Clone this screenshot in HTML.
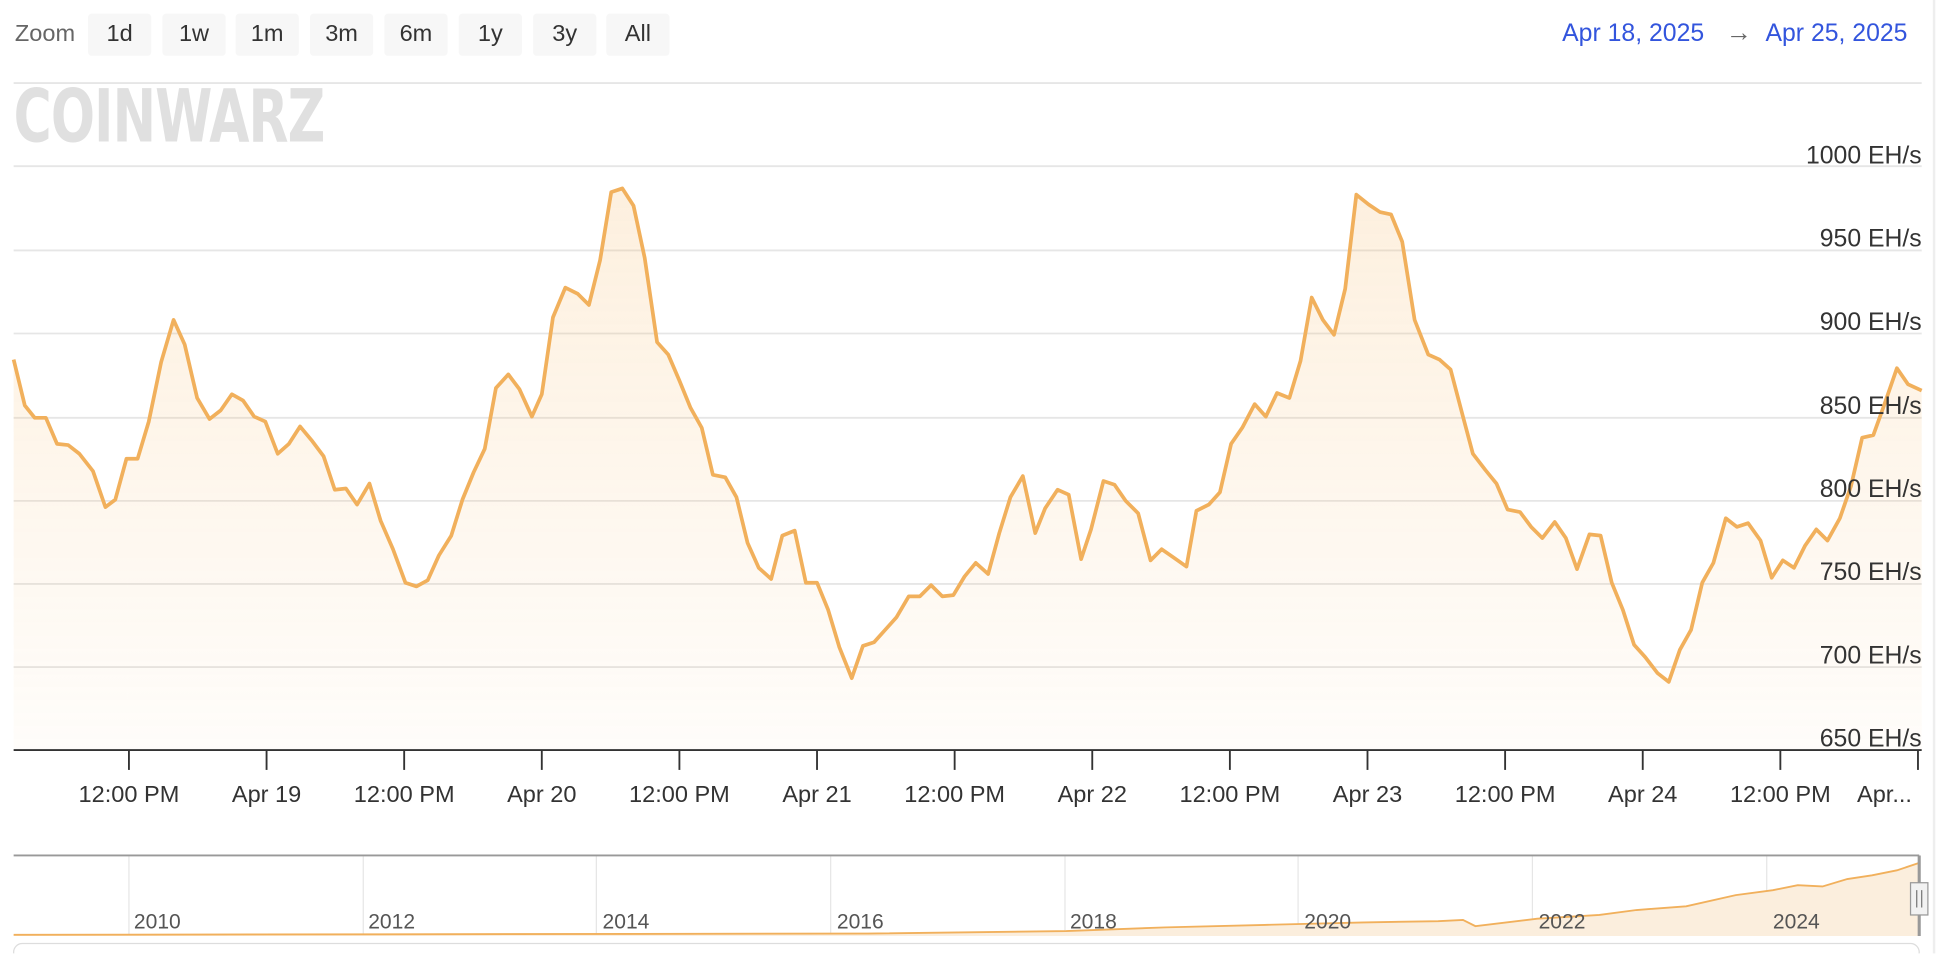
<!DOCTYPE html>
<html><head><meta charset="utf-8"><style>
html,body{margin:0;padding:0;background:#fff;width:1944px;height:954px;overflow:hidden}
#w{position:absolute;left:0;top:0;width:1568px;height:769px;transform:scale(1.2398);transform-origin:0 0;font-family:"Liberation Sans",sans-serif}
.b{position:absolute;top:11px;height:34px;width:51px;background:#f7f7f7;border-radius:3px;font-size:19px;color:#333;text-align:center;line-height:34px}
.t{position:absolute;font-size:20px;color:#333;white-space:nowrap}
</style></head><body><div id="w">
<div class="t" style="left:12px;top:17px;color:#666;font-size:19px">Zoom</div>
<div class="b" style="left:71px">1d</div><div class="b" style="left:131px">1w</div><div class="b" style="left:190px">1m</div><div class="b" style="left:250px">3m</div><div class="b" style="left:310px">6m</div><div class="b" style="left:370px">1y</div><div class="b" style="left:430px">3y</div><div class="b" style="left:489px">All</div>
<div class="t" style="left:1260px;top:16px;color:#3355dd">Apr 18, 2025</div>
<div class="t" style="left:1392px;top:15px;color:#666;font-size:21px">→</div>
<div class="t" style="left:1424px;top:16px;color:#3355dd">Apr 25, 2025</div>
<div style="position:absolute;left:11px;top:62px;font-size:59px;font-weight:900;color:#e0e0e0;line-height:64px;transform:scaleX(0.71);transform-origin:0 0;font-family:'DejaVu Sans',sans-serif;letter-spacing:-1px">COINWARZ</div>
<div style="position:absolute;right:7px;top:0;width:2px;height:769px;background:#eee"></div>
<svg width="1568" height="769" style="position:absolute;left:0;top:0">
<defs><linearGradient id="g" x1="0" y1="0" x2="0" y2="1"><stop offset="0" stop-color="#f5b35b" stop-opacity="0.2"/><stop offset="1" stop-color="#f5b35b" stop-opacity="0.03"/></linearGradient></defs>
<g stroke="#e6e6e6" stroke-width="1.5">
<line x1="11" x2="1550" y1="67" y2="67"/><line x1="11" x2="1550" y1="134" y2="134"/><line x1="11" x2="1550" y1="202" y2="202"/><line x1="11" x2="1550" y1="269" y2="269"/><line x1="11" x2="1550" y1="337" y2="337"/><line x1="11" x2="1550" y1="404" y2="404"/><line x1="11" x2="1550" y1="471" y2="471"/><line x1="11" x2="1550" y1="538" y2="538"/>
</g>
<path id="p" d="M11,290 L20,327 28,337 37,337 46,358 55,359 64,366 75,380 85,409 93,403 102,370 111,370 120,340 130,292 140,258 149,278 159,321 169,338 178,331 187,318 196,323 205,336 214,340 224,366 233,358 242,344 252,356 261,368 270,395 279,394 288,407 298,390 307,420 317,443 327,470 336,473 345,468 354,448 364,432 373,403 382,381 391,362 400,313 410,302 419,314 429,336 437,318 446,256 456,232 466,237 475,246 484,210 493,155 502,152 511,166 520,208 530,276 539,286 548,307 557,329 566,345 575,383 585,385 594,401 603,438 612,458 622,467 631,432 641,428 650,470 659,470 668,492 677,522 687,547 696,521 705,518 714,508 723,498 733,481 742,481 751,472 760,481 769,480 778,465 787,454 797,463 806,430 815,401 825,384 835,430 843,410 853,395 862,399 872,451 880,427 890,388 899,391 908,404 918,414 928,452 937,443 947,450 957,457 965,412 975,407 984,397 993,358 1002,345 1012,326 1021,336 1030,317 1040,321 1049,291 1058,240 1067,258 1076,270 1085,233 1094,157 1104,165 1113,171 1122,173 1131,195 1141,258 1152,286 1161,290 1170,298 1180,336 1188,366 1198,379 1207,390 1216,411 1226,413 1235,425 1244,434 1254,421 1263,434 1272,459 1282,431 1291,432 1300,470 1309,492 1318,520 1327,530 1337,543 1346,550 1355,524 1364,508 1373,470 1382,454 1392,418 1401,425 1410,422 1420,436 1429,466 1438,452 1447,458 1456,440 1465,427 1474,436 1484,418 1493,392 1502,353 1511,351 1520,326 1530,297 1539,310 1550,315" fill="none"/>
<path d="M11,290 L20,327 28,337 37,337 46,358 55,359 64,366 75,380 85,409 93,403 102,370 111,370 120,340 130,292 140,258 149,278 159,321 169,338 178,331 187,318 196,323 205,336 214,340 224,366 233,358 242,344 252,356 261,368 270,395 279,394 288,407 298,390 307,420 317,443 327,470 336,473 345,468 354,448 364,432 373,403 382,381 391,362 400,313 410,302 419,314 429,336 437,318 446,256 456,232 466,237 475,246 484,210 493,155 502,152 511,166 520,208 530,276 539,286 548,307 557,329 566,345 575,383 585,385 594,401 603,438 612,458 622,467 631,432 641,428 650,470 659,470 668,492 677,522 687,547 696,521 705,518 714,508 723,498 733,481 742,481 751,472 760,481 769,480 778,465 787,454 797,463 806,430 815,401 825,384 835,430 843,410 853,395 862,399 872,451 880,427 890,388 899,391 908,404 918,414 928,452 937,443 947,450 957,457 965,412 975,407 984,397 993,358 1002,345 1012,326 1021,336 1030,317 1040,321 1049,291 1058,240 1067,258 1076,270 1085,233 1094,157 1104,165 1113,171 1122,173 1131,195 1141,258 1152,286 1161,290 1170,298 1180,336 1188,366 1198,379 1207,390 1216,411 1226,413 1235,425 1244,434 1254,421 1263,434 1272,459 1282,431 1291,432 1300,470 1309,492 1318,520 1327,530 1337,543 1346,550 1355,524 1364,508 1373,470 1382,454 1392,418 1401,425 1410,422 1420,436 1429,466 1438,452 1447,458 1456,440 1465,427 1474,436 1484,418 1493,392 1502,353 1511,351 1520,326 1530,297 1539,310 1550,315 L1550,605 L11,605 Z" fill="url(#g)"/>
<use href="#p" stroke="#f1b05c" stroke-width="3" stroke-linejoin="round"/>
<line x1="11" x2="1550" y1="605" y2="605" stroke="#333" stroke-width="1.5"/>
<g stroke="#333" stroke-width="1.5">
<line x1="104" x2="104" y1="605" y2="621"/><line x1="215" x2="215" y1="605" y2="621"/><line x1="326" x2="326" y1="605" y2="621"/><line x1="437" x2="437" y1="605" y2="621"/><line x1="548" x2="548" y1="605" y2="621"/><line x1="659" x2="659" y1="605" y2="621"/><line x1="770" x2="770" y1="605" y2="621"/><line x1="881" x2="881" y1="605" y2="621"/><line x1="992" x2="992" y1="605" y2="621"/><line x1="1103" x2="1103" y1="605" y2="621"/><line x1="1214" x2="1214" y1="605" y2="621"/><line x1="1325" x2="1325" y1="605" y2="621"/><line x1="1436" x2="1436" y1="605" y2="621"/><line x1="1547" x2="1547" y1="605" y2="621"/>
</g>
<g font-family="Liberation Sans,sans-serif" font-size="20" fill="#333" text-anchor="end">
<text x="1550" y="132">1000 EH/s</text><text x="1550" y="199">950 EH/s</text><text x="1550" y="266">900 EH/s</text><text x="1550" y="334">850 EH/s</text><text x="1550" y="401">800 EH/s</text><text x="1550" y="468">750 EH/s</text><text x="1550" y="535">700 EH/s</text><text x="1550" y="602">650 EH/s</text>
</g>
<g font-family="Liberation Sans,sans-serif" font-size="19" fill="#333" text-anchor="middle">
<text x="104" y="647">12:00 PM</text><text x="215" y="647">Apr 19</text><text x="326" y="647">12:00 PM</text><text x="437" y="647">Apr 20</text><text x="548" y="647">12:00 PM</text><text x="659" y="647">Apr 21</text><text x="770" y="647">12:00 PM</text><text x="881" y="647">Apr 22</text><text x="992" y="647">12:00 PM</text><text x="1103" y="647">Apr 23</text><text x="1214" y="647">12:00 PM</text><text x="1325" y="647">Apr 24</text><text x="1436" y="647">12:00 PM</text><text x="1520" y="647">Apr...</text>
</g>
<g stroke="#e6e6e6" stroke-width="1">
<line x1="104" x2="104" y1="690" y2="755"/><line x1="293" x2="293" y1="690" y2="755"/><line x1="481" x2="481" y1="690" y2="755"/><line x1="670" x2="670" y1="690" y2="755"/><line x1="859" x2="859" y1="690" y2="755"/><line x1="1047" x2="1047" y1="690" y2="755"/><line x1="1236" x2="1236" y1="690" y2="755"/><line x1="1425" x2="1425" y1="690" y2="755"/>
</g>
<path d="M11,754 L700,753 860,751 940,748 1020,746 1100,744 1160,743 1180,742 1190,747 1240,741 1290,738 1320,734 1360,731 1400,722 1430,718 1450,714 1470,715 1490,709 1510,706 1530,702 1548,696 L1548,755 L11,755 Z" fill="#fbeedd"/>
<path d="M11,754 L700,753 860,751 940,748 1020,746 1100,744 1160,743 1180,742 1190,747 1240,741 1290,738 1320,734 1360,731 1400,722 1430,718 1450,714 1470,715 1490,709 1510,706 1530,702 1548,696" fill="none" stroke="#f1b05c" stroke-width="1.5"/>
<g font-family="Liberation Sans,sans-serif" font-size="17" fill="#555">
<text x="108" y="749">2010</text><text x="297" y="749">2012</text><text x="486" y="749">2014</text><text x="675" y="749">2016</text><text x="863" y="749">2018</text><text x="1052" y="749">2020</text><text x="1241" y="749">2022</text><text x="1430" y="749">2024</text>
</g>
<line x1="11" x2="1548" y1="690" y2="690" stroke="#999" stroke-width="1.5"/>
<line x1="1548" x2="1548" y1="690" y2="755" stroke="#999" stroke-width="2.5"/>
<rect x="1541" y="712" width="14" height="26" fill="#f2f2f2" stroke="#999" stroke-width="1"/>
<line x1="1546" x2="1546" y1="718" y2="732" stroke="#777"/><line x1="1550" x2="1550" y1="718" y2="732" stroke="#777"/>
<rect x="11" y="761" width="1537" height="14" rx="7" fill="#fff" stroke="#ddd"/>
</svg>
</div></body></html>
